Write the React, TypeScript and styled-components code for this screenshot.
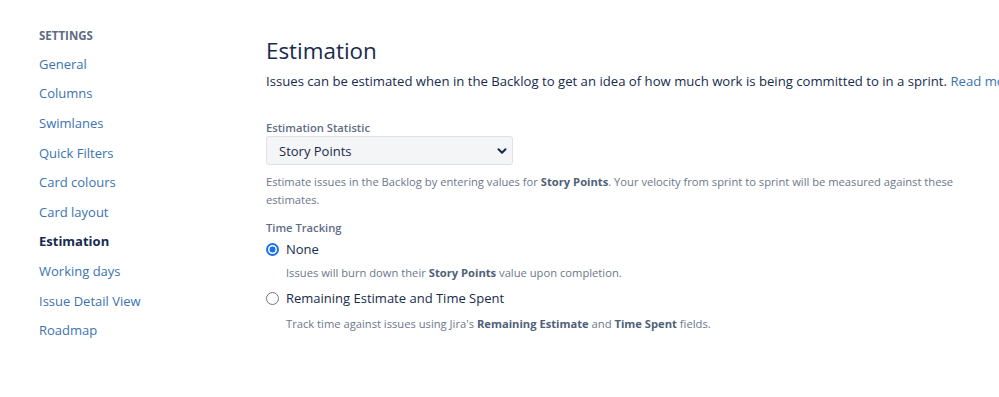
import React, { FC } from "react";
import styled, { createGlobalStyle } from "styled-components";

const GlobalStyle = createGlobalStyle`
  html, body {
    margin: 0;
    padding: 0;
    background: #fff;
  }
  body {
    font-family: "Segoe UI", "Open Sans", "Noto Sans", sans-serif;
    color: #172b4d;
    overflow: hidden;
  }
`;

const Page = styled.div`
  display: flex;
  width: 999px;
  height: 397px;
  overflow: hidden;
`;

const Sidebar = styled.nav`
  flex: 0 0 227px;
  padding: 28px 0 0 39px;
`;

const SidebarTitle = styled.h4`
  margin: 0 0 5px;
  font-size: 11.5px;
  line-height: 16px;
  font-weight: 700;
  text-transform: uppercase;
  color: #5e6c84;
`;

const NavList = styled.ul`
  margin: 0;
  padding: 0;
  list-style: none;
`;

const NavItem = styled.li<{ $active?: boolean }>`
  height: 29.6px;
  display: flex;
  align-items: center;
  font-size: 13px;
  white-space: nowrap;
  color: ${(p) => (p.$active ? "#172b4d" : "#3b73af")};
  font-weight: ${(p) => (p.$active ? 700 : 400)};
`;

const Main = styled.main`
  flex: 1 0 auto;
  padding-top: 37px;
  white-space: nowrap;
`;

const Heading = styled.h2`
  margin: 0 0 6px;
  font-size: 22.4px;
  line-height: 28px;
  font-weight: 500;
  color: #172b4d;
`;

const Intro = styled.p`
  margin: 0;
  font-size: 13.15px;
  line-height: 20px;
  color: #172b4d;
`;

const Link = styled.a`
  color: #3b73af;
  text-decoration: none;
`;

const FieldLabel = styled.div<{ $gap: number }>`
  margin-top: ${(p) => p.$gap}px;
  font-size: 11.2px;
  line-height: 16px;
  font-weight: 600;
  color: #5e6c84;
`;

const SelectBox = styled.div`
  box-sizing: border-box;
  width: 247px;
  height: 29px;
  display: flex;
  align-items: center;
  justify-content: space-between;
  padding: 0 4px 0 12px;
  background: #f4f5f7;
  border: 1px solid #dfe1e6;
  border-radius: 3px;
  font-size: 13px;
  color: #172b4d;
`;

const Help = styled.p<{ $gap: number; $indent?: boolean }>`
  margin: ${(p) => p.$gap}px 0 0 ${(p) => (p.$indent ? 20 : 0)}px;
  max-width: 700px;
  white-space: normal;
  font-size: 11.2px;
  line-height: 18px;
  color: #6b778c;

  b {
    font-weight: 700;
    color: #505f79;
  }
`;

const RadioRow = styled.label<{ $gap: number }>`
  margin-top: ${(p) => p.$gap}px;
  display: flex;
  align-items: center;
  gap: 7px;
  height: 20px;
  font-size: 13px;
  color: #172b4d;
`;

const RadioDot = styled.span<{ $checked?: boolean }>`
  box-sizing: border-box;
  width: 13px;
  height: 13px;
  border-radius: 50%;
  border: ${(p) => (p.$checked ? "2px solid #1a73e8" : "1px solid #767676")};
  background: ${(p) =>
    p.$checked ? "radial-gradient(circle, #1a73e8 0 2.8px, #fff 3.3px)" : "#fff"};
`;

const Chevron: FC = () => (
  <svg width="12" height="12" viewBox="0 0 12 12">
    <path d="M2.5 4.2 L6 7.7 L9.5 4.2" fill="none" stroke="#172b4d" strokeWidth="2" strokeLinecap="round" strokeLinejoin="round" />
  </svg>
);

const navItems = [
  "General",
  "Columns",
  "Swimlanes",
  "Quick Filters",
  "Card colours",
  "Card layout",
  "Estimation",
  "Working days",
  "Issue Detail View",
  "Roadmap",
];

export default function App() {
  return (
    <>
      <GlobalStyle />
      <Page>
        <Sidebar>
          <SidebarTitle>Settings</SidebarTitle>
          <NavList>
            {navItems.map((item) => (
              <NavItem key={item} $active={item === "Estimation"}>
                {item}
              </NavItem>
            ))}
          </NavList>
        </Sidebar>
        <Main>
          <Heading>Estimation</Heading>
          <Intro>
            Issues can be estimated when in the Backlog to get an idea of how much work is being committed to in a
            sprint. <Link href="#">Read more about estimation</Link>
          </Intro>
          <FieldLabel $gap={29}>Estimation Statistic</FieldLabel>
          <SelectBox>
            <span>Story Points</span>
            <Chevron />
          </SelectBox>
          <Help $gap={8}>
            Estimate issues in the Backlog by entering values for <b>Story Points</b>. Your velocity from sprint to
            sprint will be measured against these estimates.
          </Help>
          <FieldLabel $gap={11}>Time Tracking</FieldLabel>
          <RadioRow $gap={3}>
            <RadioDot $checked />
            None
          </RadioRow>
          <Help $gap={5} $indent>
            Issues will burn down their <b>Story Points</b> value upon completion.
          </Help>
          <RadioRow $gap={6}>
            <RadioDot />
            Remaining Estimate and Time Spent
          </RadioRow>
          <Help $gap={7} $indent>
            Track time against issues using Jira's <b>Remaining Estimate</b> and <b>Time Spent</b> fields.
          </Help>
        </Main>
      </Page>
    </>
  );
}
